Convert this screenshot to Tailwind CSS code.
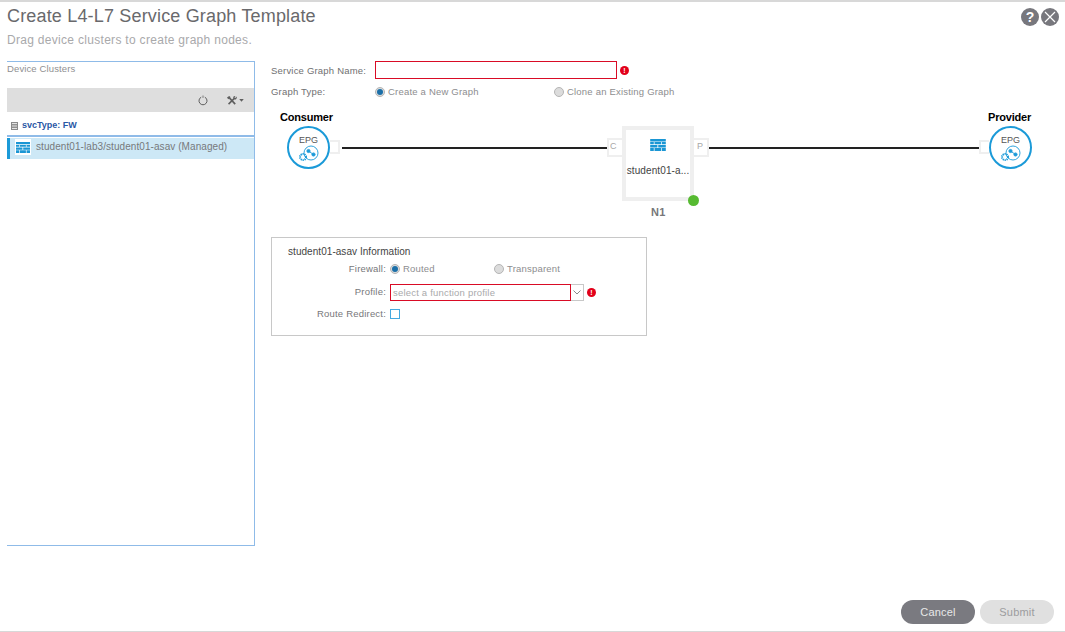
<!DOCTYPE html>
<html><head><meta charset="utf-8"><title>Create L4-L7 Service Graph Template</title>
<script src="https://cdn.jsdelivr.net/npm/@tailwindcss/browser@4"></script></head>
<body class="bg-white">
<div class="w-[1065px] h-[632px] flex flex-col overflow-hidden border-t-2 border-b border-[#d8d8d8] font-['Liberation_Sans',sans-serif] text-[#6b6b6d]">
  <!-- header -->
  <header class="h-[59px] shrink-0 flex justify-between pl-[7px] pr-[6px]">
    <div>
      <h1 class="text-[18px] leading-[20px] mt-[4px] tracking-[0.17px] text-[#69696c]">Create L4-L7 Service Graph Template</h1>
      <p class="text-[12px] leading-[14px] mt-[7px] tracking-[0.3px] text-[#a9a9ab]">Drag device clusters to create graph nodes.</p>
    </div>
    <div class="flex gap-[2px] mt-[6px]">
      <div class="w-[18px] h-[18px] rounded-full bg-[#77777d] text-white text-[14px] leading-[18px] text-center font-bold">?</div>
      <div class="w-[18px] h-[18px] rounded-full bg-[#77777d] flex items-center justify-center">
        <svg width="12" height="12" viewBox="0 0 12 12" fill="none" stroke="#fff" stroke-width="1.2"><path d="M1 1l10 10M11 1L1 11"/></svg>
      </div>
    </div>
  </header>
  <!-- body -->
  <main class="flex pl-[7px] shrink-0">
    <!-- left panel -->
    <aside class="w-[248px] h-[485px] shrink-0 border-t border-r border-b border-[#8fbbe8] flex flex-col">
      <div class="h-[26px] text-[9.5px] leading-[12px] pt-[1px] tracking-[0.12px] text-[#8f8f91]">Device Clusters</div>
      <div class="h-[24px] bg-[#dedede] flex items-center justify-end shrink-0">
        <svg class="mr-[19px]" width="10" height="11" viewBox="0 0 10 11" fill="none" stroke="#5f5f5f" stroke-width="1"><path d="M3.2 2.2a4 4 0 1 0 3.6 0"/><path d="M5 0.5v2.4" stroke-width="0.8"/></svg>
        <svg width="10" height="9" viewBox="0 0 10 9" fill="#5f5f5f"><path d="M0 1.6L2.2 0l1.3.9-.3.7 5.6 5.9-1.2 1.2L2 2.8l-.8.4z"/><path d="M9.7.6L8.3 2 7.4 1.2 8.6 0C7 -.3 5.9 .9 6.3 2.3L1 7.6 2.1 8.7 7.4 3.4C8.9 3.9 10.2 2.4 9.7.6z"/></svg>
        <svg class="ml-[2px] mr-[10px]" width="5" height="3" viewBox="0 0 6 4"><path d="M0 0h6L3 3.5z" fill="#5f5f5f"/></svg>
      </div>
      <div class="h-[23px] flex items-center pt-[5px] pl-[4px] gap-[4px] text-[9px] font-bold text-[#2a58a5]">
        <svg width="7" height="8" viewBox="0 0 7 8"><rect x="0.5" y="0.5" width="6" height="7" fill="#fff" stroke="#8a8a8a"/><path d="M1 4h5M1 2.3h5M1 5.7h5" stroke="#777"/></svg>
        <span class="font-bold">svcType: FW</span>
      </div>
      <div class="h-[2px] bg-[#8fbbe8]"></div>
      <div class="mt-[1px] h-[21px] bg-[#cde8f6] border-l-[3px] border-[#1b9ad8] flex items-start pt-[1px] pl-[5px] gap-[5px] text-[10px] leading-[16px] tracking-[0.07px] text-[#77797c]">
        <div class="w-[16px] h-[16px] bg-white flex items-center justify-center">
          <svg width="14" height="11" viewBox="0 0 13 10" fill="#1a96d4"><path d="M0 0h13v2H0zM0 2.6h3v1.8H0zM3.6 2.6h5.6v1.8H3.6zM9.8 2.6H13v1.8H9.8zM0 5h6v2H0zM6.7 5H13v2H6.7zM0 7.6h3V10H0zM3.6 7.6h5.6V10H3.6zM9.8 7.6H13V10H9.8z"/></svg>
        </div>
        <span>student01-lab3/student01-asav (Managed)</span>
      </div>
    </aside>
    <!-- right -->
    <section class="flex-1 pl-[16px] text-[9.5px] tracking-[0.2px] text-[#6f6f71]">
      <div class="flex items-center h-[18px]">
        <label class="w-[104px] pt-[2px]">Service Graph Name:</label>
        <div class="w-[242px] h-[18px] border border-[#d90b25]"></div>
        <span class="ml-[3px] w-[9px] h-[9px] rounded-full bg-[#e2001a] text-white text-[7px] leading-[9px] text-center font-bold">!</span>
      </div>
      <div class="flex items-center h-[14px] mt-[5px] pt-[2px]">
        <label class="w-[104px]">Graph Type:</label>
        <span class="w-[10px] h-[10px] rounded-full bg-[#dcdcdc] border border-[#b5b5b5] flex items-center justify-center"><span class="w-[6px] h-[6px] rounded-full bg-[#1b6fa8]"></span></span>
        <span class="ml-[3px] w-[166px] text-[#8d8d8f]">Create a New Graph</span>
        <span class="w-[10px] h-[10px] rounded-full bg-[#dcdcdc] border border-[#b5b5b5]"></span>
        <span class="ml-[3px] text-[#8d8d8f]">Clone an Existing Graph</span>
      </div>
      <!-- diagram canvas -->
      <div class="relative h-[125px] w-[794px]">
        <div class="absolute left-[9px] top-[13px] text-[11px] leading-[13px] font-bold text-black tracking-[-0.2px]">Consumer</div>
        <div class="absolute left-[16px] top-[28px] w-[43px] h-[43px] rounded-full border-2 border-[#1b9ad8] bg-white flex flex-col items-center pt-[7px] text-[9px] leading-[10px] tracking-normal text-[#555]">
          EPG
          <svg width="22" height="16" viewBox="0 0 22 16" fill="none" stroke="#1b9ad8" stroke-width="0.9"><circle cx="13" cy="8" r="7"/><circle cx="10.5" cy="6" r="1.6" fill="#1b9ad8"/><circle cx="15.5" cy="9.5" r="1.6" fill="#1b9ad8"/><path d="M10.5 6l5 3.5"/><circle cx="5" cy="12" r="3" stroke-dasharray="1.2 .7" stroke-width="2"/></svg>
        </div>
        <div class="absolute left-[59px] top-[42px] w-[10px] h-[14px] border-2 border-l-0 border-[#efefef]"></div>
        <div class="absolute left-[71px] top-[49px] w-[265px] h-[2px] bg-[#222]"></div>
        <div class="absolute left-[336px] top-[40px] w-[15px] h-[19px] border-2 border-r-0 border-[#efefef] text-[#a8a8a8] text-[9px] leading-[12px] pl-[1px]">C</div>
        <div class="absolute left-[351px] top-[28px] w-[72px] h-[75px] border-[4px] border-[#efefef] bg-white flex flex-col items-center pt-[9px]">
          <svg width="16" height="12" viewBox="0 0 13 10" fill="#1a96d4"><path d="M0 0h13v2H0zM0 2.6h3v1.8H0zM3.6 2.6h5.6v1.8H3.6zM9.8 2.6H13v1.8H9.8zM0 5h6v2H0zM6.7 5H13v2H6.7zM0 7.6h3V10H0zM3.6 7.6h5.6V10H3.6zM9.8 7.6H13V10H9.8z"/></svg>
          <span class="mt-[14px] text-[10px] leading-[12px] tracking-[0.1px] text-[#444]">student01-a...</span>
        </div>
        <div class="absolute left-[423px] top-[40px] w-[15px] h-[19px] border-2 border-l-0 border-[#efefef] text-[#a8a8a8] text-[9px] leading-[12px] pl-[3px]">P</div>
        <div class="absolute left-[438px] top-[49px] w-[270px] h-[2px] bg-[#222]"></div>
        <div class="absolute left-[708px] top-[42px] w-[10px] h-[14px] border-2 border-r-0 border-[#efefef]"></div>
        <div class="absolute left-[417px] top-[97px] w-[11px] h-[11px] rounded-full bg-[#56ba31]"></div>
        <div class="absolute left-[380px] top-[108px] text-[11px] leading-[13px] font-bold text-[#77777a]">N1</div>
        <div class="absolute left-[717px] top-[13px] text-[11px] leading-[13px] font-bold text-black tracking-[-0.2px]">Provider</div>
        <div class="absolute left-[718px] top-[28px] w-[43px] h-[43px] rounded-full border-2 border-[#1b9ad8] bg-white flex flex-col items-center pt-[7px] text-[9px] leading-[10px] tracking-normal text-[#555]">
          EPG
          <svg width="22" height="16" viewBox="0 0 22 16" fill="none" stroke="#1b9ad8" stroke-width="0.9"><circle cx="13" cy="8" r="7"/><circle cx="10.5" cy="6" r="1.6" fill="#1b9ad8"/><circle cx="15.5" cy="9.5" r="1.6" fill="#1b9ad8"/><path d="M10.5 6l5 3.5"/><circle cx="5" cy="12" r="3" stroke-dasharray="1.2 .7" stroke-width="2"/></svg>
        </div>
      </div>
      <!-- info box -->
      <div class="mt-[14px] w-[376px] h-[99px] border border-[#c8c8c8] pt-[8px]">
        <div class="ml-[16px] text-[10px] leading-[12px] text-[#444] tracking-[0.05px]">student01-asav Information</div>
        <div class="flex items-center h-[14px] mt-[4px]">
          <label class="w-[114px] text-right text-[#77777a]">Firewall:</label>
          <span class="ml-[4px] w-[10px] h-[10px] rounded-full bg-[#dcdcdc] border border-[#b5b5b5] flex items-center justify-center"><span class="w-[6px] h-[6px] rounded-full bg-[#1b6fa8]"></span></span>
          <span class="ml-[3px] w-[91px] text-[#8d8d8f]">Routed</span>
          <span class="w-[10px] h-[10px] rounded-full bg-[#dcdcdc] border border-[#b5b5b5]"></span>
          <span class="ml-[3px] text-[#8d8d8f]">Transparent</span>
        </div>
        <div class="flex items-center h-[18px] mt-[7px]">
          <label class="w-[114px] text-right text-[#77777a]">Profile:</label>
          <div class="ml-[4px] w-[181px] h-[17px] border border-[#d90b25] text-[#a9a9ab] pl-[2px] leading-[15px]">select a function profile</div>
          <div class="w-[13px] h-[17px] border border-l-0 border-[#c8c8c8] flex items-center justify-center">
            <svg width="8" height="5" viewBox="0 0 8 5" fill="none" stroke="#8a8a8a"><path d="M.5.5L4 4l3.5-3.5"/></svg>
          </div>
          <span class="ml-[3px] w-[9px] h-[9px] rounded-full bg-[#e2001a] text-white text-[7px] leading-[9px] text-center font-bold">!</span>
        </div>
        <div class="flex items-center h-[14px] mt-[6px]">
          <label class="w-[114px] text-right text-[#77777a]">Route Redirect:</label>
          <span class="ml-[4px] w-[10px] h-[10px] border border-[#45a9e0]"></span>
        </div>
      </div>
    </section>
  </main>
  <!-- footer -->
  <footer class="flex-1 flex items-end justify-end gap-[5px] pr-[11px] pb-[7px] text-[11px]">
    <button class="w-[74px] h-[24px] rounded-full bg-[#7a7a80] text-[#e8e8e8] tracking-[0.2px]">Cancel</button>
    <button class="w-[74px] h-[24px] rounded-full bg-[#e0e0e0] text-[#9c9c9e] tracking-[0.2px]">Submit</button>
  </footer>
</div>
</body></html>
